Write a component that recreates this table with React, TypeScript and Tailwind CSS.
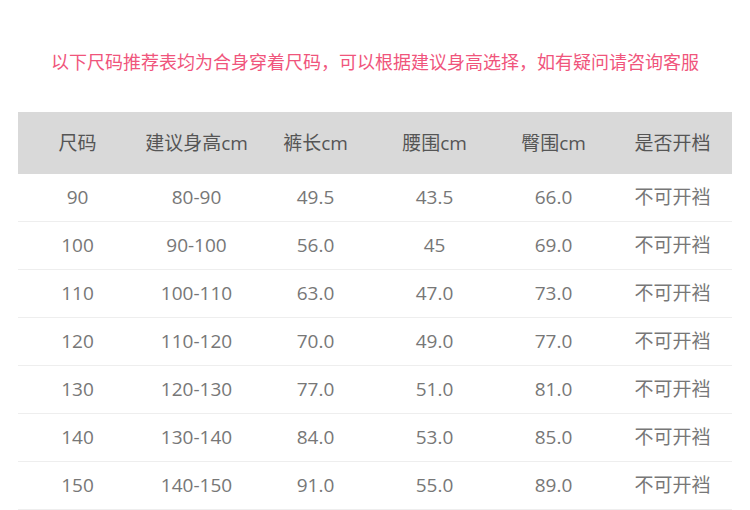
import React from "react";

const headers = ["尺码", "建议身高cm", "裤长cm", "腰围cm", "臀围cm", "是否开档"];
const rows = [
  ["90", "80-90", "49.5", "43.5", "66.0", "不可开裆"],
  ["100", "90-100", "56.0", "45", "69.0", "不可开裆"],
  ["110", "100-110", "63.0", "47.0", "73.0", "不可开裆"],
  ["120", "110-120", "70.0", "49.0", "77.0", "不可开裆"],
  ["130", "120-130", "77.0", "51.0", "81.0", "不可开裆"],
  ["140", "130-140", "84.0", "53.0", "85.0", "不可开裆"],
  ["150", "140-150", "91.0", "55.0", "89.0", "不可开裆"],
];

const font = { fontFamily: '"Open Sans", "Noto Sans CJK SC", sans-serif' };

export default function App() {
  return (
    <div className="w-[750px] h-[510px] bg-white overflow-hidden" style={font}>
      <div className="pt-[50px] h-[112px]">
        <p className="text-center text-[18px] leading-[24px] text-[#f0557c]">
          以下尺码推荐表均为合身穿着尺码，可以根据建议身高选择，如有疑问请咨询客服
        </p>
      </div>
      <div className="mx-[18px] w-[714px]">
        <div className="grid grid-cols-6 h-[62px] items-center bg-[#d9d9d9] text-[#555555] text-[19px]">
          {headers.map((h) => (
            <div key={h} className="text-center">{h}</div>
          ))}
        </div>
        {rows.map((r, i) => (
          <div key={i} className="grid grid-cols-6 h-[48px] items-center border-b border-[#eeeeee] text-[#777777] text-[19px]">
            {r.map((c, j) => (
              <div key={j} className="text-center">{c}</div>
            ))}
          </div>
        ))}
      </div>
    </div>
  );
}
